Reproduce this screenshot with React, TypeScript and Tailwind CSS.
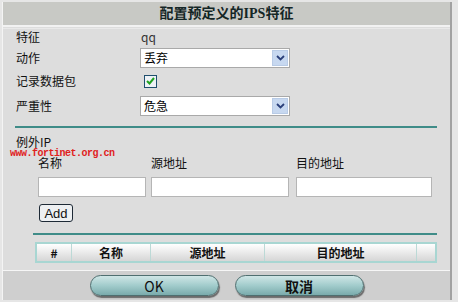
const cjk = { fontFamily: '"Noto Sans CJK SC", "Liberation Sans", sans-serif' };

function SelectBox({ value }: { value: string }) {
  return (
    <div className="flex h-[20px] w-[150px] items-center border border-[#a9a9a9] bg-white">
      <span className="flex-1 pl-[3px] text-[12px] leading-none text-black">{value}</span>
      <span className="mr-[1px] flex h-[16px] w-[16px] items-center justify-center border border-[#b8cbe6] bg-[#c7d8f0]">
        <svg width="9" height="6" viewBox="0 0 9 6">
          <path d="M1 1 L4.5 4.5 L8 1" fill="none" stroke="#2a3f7a" strokeWidth="1.8" />
        </svg>
      </span>
    </div>
  );
}

function TextInput({ width }: { width: string }) {
  return <div className={`h-[20px] ${width} border border-[#b5b5b5] bg-white`} />;
}

function PillButton({ label, bold }: { label: string; bold?: boolean }) {
  return (
    <div className="flex h-[21px] w-[129px] items-center justify-center rounded-full border border-[#4f6f70] bg-gradient-to-b from-[#cfe6e6] via-[#a2cccc] to-[#7aabac] shadow-[1px_2px_1px_#6b6b6b]">
      <span className={`text-[14px] leading-none text-[#111] ${bold ? 'font-bold' : ''}`}>{label}</span>
    </div>
  );
}

export default function App() {
  return (
    <div className="flex h-[302px] w-[458px] bg-[#e6e6e6]" style={cjk}>
      <div className="ml-[2px] mt-[2px] flex h-[298px] w-[450px] flex-col border-l border-l-[#f4f4f4] border-r-2 border-r-[#a2a2a2] bg-[#dddddd]">
        {/* title */}
        <div className="flex h-[23px] items-center justify-center bg-[#c8c9c5]">
          <span className="text-[14px] font-bold text-[#142626]" style={{ fontFamily: '"Liberation Serif", "Noto Sans CJK SC", serif' }}>
            配置预定义的IPS特征
          </span>
        </div>
        <div className="h-[2px] bg-[#f2f2f2]" />
        <div className="mt-px h-px bg-[#e9e9e9]" />

        <div className="flex flex-col pl-[13px] text-[12px] text-[#111]">
          <div className="flex h-[15px] items-center">
            <span className="w-[125px]">特征</span>
            <span className="text-[#333]">qq</span>
          </div>
          <div className="mt-[4px] flex h-[20px] items-center">
            <span className="w-[124px]">动作</span>
            <SelectBox value="丢弃" />
          </div>
          <div className="mt-[6px] flex h-[14px] items-center">
            <span className="w-[128px]">记录数据包</span>
            <span className="flex h-[13px] w-[13px] items-center justify-center border border-[#1f4f6e] bg-[#eef2f6]">
              <svg width="9" height="8" viewBox="0 0 9 8">
                <path d="M1 4 L3.5 6.5 L8 1" fill="none" stroke="#21a321" strokeWidth="2" />
              </svg>
            </span>
          </div>
          <div className="mt-[8px] flex h-[20px] items-center">
            <span className="w-[124px]">严重性</span>
            <SelectBox value="危急" />
          </div>
        </div>

        <div className="ml-[12px] mt-[10px] h-[2px] w-[422px] bg-[#3f8c88]" />

        <div className="relative flex flex-col pl-[13px] text-[12px] text-[#111]">
          <span className="mt-[7px] leading-[13px]">例外IP</span>
          <span
            className="absolute left-[7px] top-[21px] text-[10px] font-bold leading-none tracking-[-0.5px] text-[#e0201c]"
            style={{ fontFamily: '"Liberation Mono", monospace' }}
          >
            www.fortinet.org.cn
          </span>
          <div className="mt-[8px] flex h-[14px] items-center pl-[22px]">
            <span className="w-[113px]">名称</span>
            <span className="w-[145px]">源地址</span>
            <span>目的地址</span>
          </div>
          <div className="mt-[7px] flex pl-[22px]">
            <TextInput width="w-[108px]" />
            <div className="ml-[5px]">
              <TextInput width="w-[138px]" />
            </div>
            <div className="ml-[7px]">
              <TextInput width="w-[136px]" />
            </div>
          </div>
          <div className="mt-[7px] pl-[23px]">
            <div className="flex h-[18px] w-[34px] items-center justify-center rounded-[3px] border border-[#1e2a36] bg-[#eef0f2] text-[13px] leading-none" style={{ fontFamily: '"Liberation Sans", sans-serif' }}>
              Add
            </div>
          </div>
        </div>

        <div className="ml-[30px] mt-[11px] h-[2px] w-[404px] bg-[#3f8c88]" />

        <div className="ml-[32px] mt-[7px] flex h-[21px] w-[402px] border-2 border-[#a8d6d2] text-[12px] font-bold text-[#111]">
          <div className="flex w-[35px] items-center justify-center border-r border-[#bcd9d6] bg-gradient-to-b from-[#ffffff] to-[#d6d6d6]">#</div>
          <div className="flex w-[79px] items-center justify-center border-r border-[#bcd9d6] bg-gradient-to-b from-[#ffffff] to-[#d6d6d6]">名称</div>
          <div className="flex w-[114px] items-center justify-center border-r border-[#bcd9d6] bg-gradient-to-b from-[#ffffff] to-[#d6d6d6]">源地址</div>
          <div className="flex w-[152px] items-center justify-center border-r border-[#bcd9d6] bg-gradient-to-b from-[#ffffff] to-[#d6d6d6]">目的地址</div>
          <div className="flex-1 bg-gradient-to-b from-[#ffffff] to-[#d6d6d6]" />
        </div>

        <div className="mt-[7px] h-px bg-[#f6f6f6]" />
        <div className="flex flex-1 items-start justify-center gap-[16px] bg-[#cfcfcf] pt-[4px]">
          <PillButton label="OK" />
          <PillButton label="取消" bold />
        </div>
      </div>
    </div>
  );
}
